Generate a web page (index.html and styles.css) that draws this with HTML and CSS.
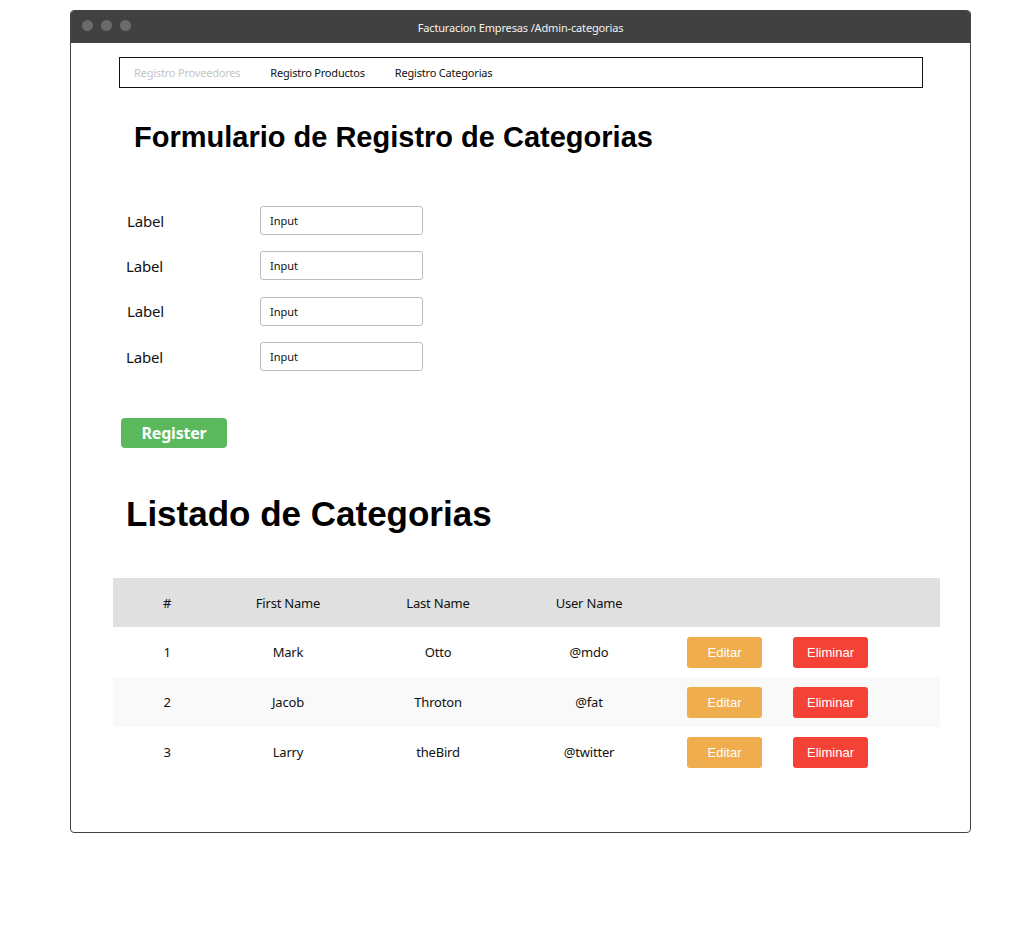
FILE: index.html
```html
<!DOCTYPE html>
<html>
<head>
<meta charset="utf-8">
<link rel="stylesheet" href="styles.css">
</head>
<body>
<div class="window">
  <div class="titlebar">
    <div class="dots"><span class="dot"></span><span class="dot"></span><span class="dot"></span></div>
    <div class="title">Facturacion Empresas /Admin-categorias</div>
  </div>
  <div class="content">
    <nav class="nav">
      <a class="nav-item muted">Registro Proveedores</a>
      <a class="nav-item">Registro Productos</a>
      <a class="nav-item">Registro Categorias</a>
    </nav>
    <h1 class="h1">Formulario de Registro de Categorias</h1>
    <div class="form">
      <div class="row"><span class="label">Label</span><div class="input">Input</div></div>
      <div class="row"><span class="label shift">Label</span><div class="input">Input</div></div>
      <div class="row"><span class="label">Label</span><div class="input">Input</div></div>
      <div class="row"><span class="label shift">Label</span><div class="input">Input</div></div>
    </div>
    <button class="register">Register</button>
    <h2 class="h2">Listado de Categorias</h2>
    <div class="table">
      <div class="tr head"><div>#</div><div>First Name</div><div>Last Name</div><div>User Name</div><div></div></div>
      <div class="tr"><div>1</div><div>Mark</div><div>Otto</div><div>@mdo</div><div class="actions"><span class="btn edit">Editar</span><span class="btn del">Eliminar</span></div></div>
      <div class="tr alt"><div>2</div><div>Jacob</div><div>Throton</div><div>@fat</div><div class="actions"><span class="btn edit">Editar</span><span class="btn del">Eliminar</span></div></div>
      <div class="tr"><div>3</div><div>Larry</div><div>theBird</div><div>@twitter</div><div class="actions"><span class="btn edit">Editar</span><span class="btn del">Eliminar</span></div></div>
    </div>
  </div>
</div>
</body>
</html>
```
FILE: styles.css
```css
* { box-sizing: border-box; }
html, body { margin: 0; padding: 0; background: #fff; }
body { padding: 10px 0 0 70px; font-family: "Noto Sans", "Liberation Sans", sans-serif; color: #111; }
.window {
  width: 901px; height: 823px;
  border: 1px solid #444; border-radius: 4px; overflow: hidden;
  background: #fff;
}
.titlebar {
  height: 32px; background: #414141; position: relative;
  display: flex; align-items: center; justify-content: center;
}
.dots { position: absolute; left: 11px; top: 9px; display: flex; gap: 8px; }
.dot { width: 11px; height: 11px; border-radius: 50%; background: #6b6b6b; display: block; }
.title { color: #f2f2f2; font-size: 11px; letter-spacing: -0.15px; }
.content { padding: 14px 0 0 48px; }
.nav {
  width: 804px; height: 31px; border: 1px solid #111;
  display: flex; align-items: center; padding-left: 14px; gap: 30px;
  font-size: 11px; letter-spacing: -0.2px;
}
.nav-item { color: #111; }
.nav-item.muted { color: #c4c4c4; }
.h1 {
  font-family: "Liberation Sans", Arial, sans-serif; font-weight: bold;
  font-size: 29px; margin: 31px 0 0 15px; line-height: 36px; color: #000;
}
.form { margin-top: 51px; display: flex; flex-direction: column; gap: 16.4px; }
.row { display: flex; align-items: center; height: 29px; }
.label { width: 141px; padding-left: 8px; font-size: 15px; letter-spacing: -0.2px; }
.label.shift { padding-left: 7px; }
.input {
  width: 163px; height: 29px; border: 1px solid #bdbdbd; border-radius: 3px;
  font-size: 11px; padding-left: 9px; display: flex; align-items: center; color: #111;
}
.register {
  margin: 47px 0 0 2px; width: 106px; height: 30px; border: none; border-radius: 4px;
  background: #5cb85c; color: #fff; font-family: "Noto Sans", sans-serif;
  font-weight: bold; font-size: 16px; letter-spacing: -0.2px; display: block; padding: 0;
}
.h2 {
  font-family: "Liberation Sans", Arial, sans-serif; font-weight: bold;
  font-size: 35px; margin: 44px 0 0 7px; line-height: 44px; color: #000;
}
.table { margin: 42px 0 0 -6px; width: 827px; font-size: 13px; letter-spacing: -0.2px; color: #111; }
.tr {
  display: grid; grid-template-columns: 108px 134px 166px 136px 1fr;
  height: 50px; align-items: center; text-align: center;
}
.tr.head { background: #e0e0e0; height: 49px; }
.tr.alt { background: #f9f9f9; }
.actions { display: flex; padding-left: 30px; gap: 31px; }
.btn {
  width: 75px; height: 31px; border-radius: 3px; color: #fff;
  font-family: "Liberation Sans", Arial, sans-serif; font-size: 13px; letter-spacing: 0;
  display: flex; align-items: center; justify-content: center;
}
.btn.edit { background: #f0ad4e; }
.btn.del { background: #f44336; }
```
